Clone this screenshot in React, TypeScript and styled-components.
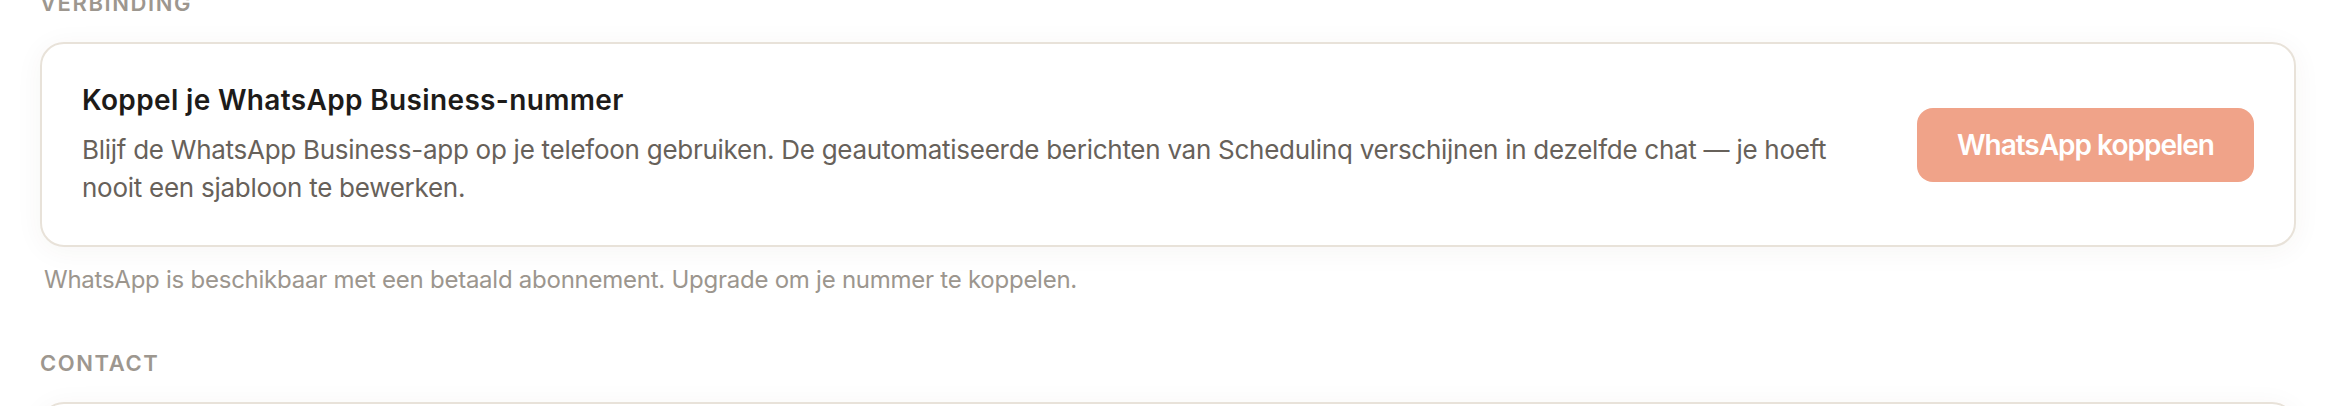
import styled, { createGlobalStyle } from 'styled-components'

const GlobalStyle = createGlobalStyle`
    html, body {
        margin: 0;
        padding: 0;
        background-color: #fff;
    }

    body {
        font-family: Inter, "Noto Sans", sans-serif;
        -webkit-font-smoothing: antialiased;
    }
`

const Page = styled.div`
    padding: 0 40px;
    margin-top: -11px;
    display: flex;
    flex-direction: column;
    gap: 51px;
`

const Section = styled.section`
    display: flex;
    flex-direction: column;
`

const Label = styled.h3`
    margin: 0 0 25px;
    font-size: 22px;
    line-height: 28px;
    font-weight: 600;
    letter-spacing: 1.6px;
    text-transform: uppercase;
    color: #9d978f;
`

const Card = styled.div<{ $empty?: boolean }>`
    display: flex;
    align-items: center;
    gap: 48px;
    padding: 38px 40px;
    min-height: ${props => (props.$empty ? '200px' : 'auto')};
    background-color: #fff;
    border: 2px solid #e8e2d9;
    border-radius: 24px;
    box-shadow: 0 4px 28px rgba(70, 50, 30, 0.05);
`

const Text = styled.div`
    flex: 1;
    min-width: 0;
`

const Title = styled.h2`
    margin: 0;
    font-size: 28px;
    line-height: 36px;
    font-weight: 600;
    letter-spacing: 0.35px;
    color: #1d1b19;
`

const Description = styled.p`
    margin: 13px 0 0;
    font-size: 26px;
    line-height: 38px;
    letter-spacing: -0.27px;
    color: #67615a;
`

const Button = styled.button`
    flex-shrink: 0;
    height: 74px;
    padding: 0 40px;
    border: none;
    border-radius: 16px;
    background-color: #f0a389;
    color: #fff;
    font-family: inherit;
    font-size: 28px;
    font-weight: 600;
    letter-spacing: -1px;
    cursor: pointer;
`

const Note = styled.p`
    margin: 15px 0 0 4px;
    font-size: 24px;
    line-height: 36px;
    letter-spacing: -0.25px;
    color: #9c968e;
`

const App = () => {
    return (
        <>
            <GlobalStyle />
            <Page>
                <Section>
                    <Label>Verbinding</Label>
                    <Card>
                        <Text>
                            <Title>Koppel je WhatsApp Business-nummer</Title>
                            <Description>
                                Blijf de WhatsApp Business-app op je telefoon gebruiken. De geautomatiseerde berichten van Schedulinq verschijnen in dezelfde chat — je hoeft nooit een sjabloon te bewerken.
                            </Description>
                        </Text>
                        <Button>WhatsApp koppelen</Button>
                    </Card>
                    <Note>WhatsApp is beschikbaar met een betaald abonnement. Upgrade om je nummer te koppelen.</Note>
                </Section>
                <Section>
                    <Label>Contact</Label>
                    <Card $empty />
                </Section>
            </Page>
        </>
    )
}

export default App
